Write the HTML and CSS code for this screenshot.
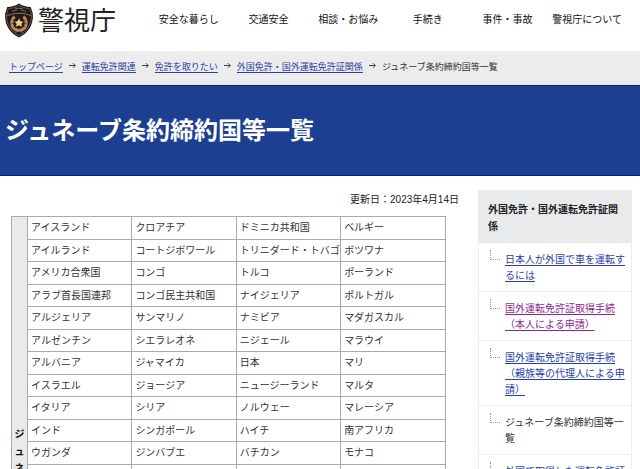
FILE: index.html
```html
<!DOCTYPE html>
<html lang="ja">
<head>
<meta charset="utf-8">
<meta name="viewport" content="width=device-width, initial-scale=1">
<title>ジュネーブ条約締約国等一覧 警視庁</title>
<link rel="stylesheet" href="styles.css">
</head>
<body>
<header class="site-header">
  <a class="logo" href="#">
    <svg class="emblem" viewBox="0 0 30 36" aria-hidden="true">
      <path d="M15 0.5 C18 3 23 4 27 4 C28 7 29 9 29.3 12 C29.8 23 24 31 15 35.6 C6 31 0.2 23 0.7 12 C1 9 2 7 3 4 C7 4 12 3 15 0.5Z" fill="#201a1b"/>
      <path d="M15 2.5 C18 4.600 22 5.600 25.800 5.700 C27 8 27.600 10 27.800 13 C28 22 23 29.500 15 33.800 C7 29.500 2 22 2.200 13 C2.400 10 3 8 4.200 5.700 C8 5.600 12 4.600 15 2.500Z" fill="none" stroke="#806052" stroke-width="0.800"/>
      <path d="M2.500 13 Q15 8 27.500 13" fill="none" stroke="#8b7165" stroke-width="1"/>
      <path d="M8 8.500 L13 7 M17 7 L22 8.500 M11 5.500 H19" stroke="#8b7165" stroke-width="1"/>
      <path d="M10.500 14 C6 18 7 25 11 27 C13 28.500 17 28.500 19 27 C23 25 24 18 19.500 14" fill="none" stroke="#b98a55" stroke-width="3"/>
      <path d="M8 17 L11 19 M7.500 21 L11 21.500 M9 25 L12 23 M22 17 L19 19 M22.500 21 L19 21.500 M21 25 L18 23" stroke="#3b2821" stroke-width="0.700"/>
      <path d="M15 16 L16.500 18.800 L19.500 19.200 L17.400 21.300 L18 24.400 L15 23 L12 24.400 L12.600 21.300 L10.500 19.200 L13.500 18.800Z" fill="#f3cf83"/>
      <path d="M11 30 Q15 28 19 30" fill="none" stroke="#8b6b54" stroke-width="1"/>
    </svg>
    <span>警視庁</span>
  </a>
  <nav class="main-nav" aria-label="メインメニュー">
    <a href="#">安全な暮らし</a>
    <a href="#">交通安全</a>
    <a href="#">相談・お悩み</a>
    <a href="#">手続き</a>
    <a href="#">事件・事故</a>
    <a href="#">警視庁について</a>
  </nav>
</header>

<nav class="breadcrumb" aria-label="現在位置">
  <a href="#">トップページ</a>
  <svg class="arrow" viewBox="0 0 7 7" aria-hidden="true"><path d="M0 3.500H6.300M4 1.200L6.300 3.500L4 5.800"/></svg>
  <a href="#">運転免許関連</a>
  <svg class="arrow" viewBox="0 0 7 7" aria-hidden="true"><path d="M0 3.500H6.300M4 1.200L6.300 3.500L4 5.800"/></svg>
  <a href="#">免許を取りたい</a>
  <svg class="arrow" viewBox="0 0 7 7" aria-hidden="true"><path d="M0 3.500H6.300M4 1.200L6.300 3.500L4 5.800"/></svg>
  <a href="#">外国免許・国外運転免許証関係</a>
  <svg class="arrow" viewBox="0 0 7 7" aria-hidden="true"><path d="M0 3.500H6.300M4 1.200L6.300 3.500L4 5.800"/></svg>
  <span>ジュネーブ条約締約国等一覧</span>
</nav>

<h1 class="page-title">ジュネーブ条約締約国等一覧</h1>

<div class="layout">
  <main class="content">
    <p class="updated">更新日：2023年4月14日</p>
    <table class="countries">
      <colgroup><col class="col-head"><col><col><col><col></colgroup>
      <tbody>
        <tr><th rowspan="12" scope="rowgroup">ジ<br>ュ<br>ネ</th><td>アイスランド</td><td>クロアチア</td><td>ドミニカ共和国</td><td>ベルギー</td></tr>
        <tr><td>アイルランド</td><td>コートジボワール</td><td>トリニダード・トバゴ</td><td>ボツワナ</td></tr>
        <tr><td>アメリカ合衆国</td><td>コンゴ</td><td>トルコ</td><td>ポーランド</td></tr>
        <tr><td>アラブ首長国連邦</td><td>コンゴ民主共和国</td><td>ナイジェリア</td><td>ポルトガル</td></tr>
        <tr><td>アルジェリア</td><td>サンマリノ</td><td>ナミビア</td><td>マダガスカル</td></tr>
        <tr><td>アルゼンチン</td><td>シエラレオネ</td><td>ニジェール</td><td>マラウイ</td></tr>
        <tr><td>アルバニア</td><td>ジャマイカ</td><td>日本</td><td>マリ</td></tr>
        <tr><td>イスラエル</td><td>ジョージア</td><td>ニュージーランド</td><td>マルタ</td></tr>
        <tr><td>イタリア</td><td>シリア</td><td>ノルウェー</td><td>マレーシア</td></tr>
        <tr><td>インド</td><td>シンガポール</td><td>ハイチ</td><td>南アフリカ</td></tr>
        <tr><td>ウガンダ</td><td>ジンバブエ</td><td>バチカン</td><td>モナコ</td></tr>
        <tr><td></td><td></td><td></td><td></td></tr>
      </tbody>
    </table>
  </main>
  <aside class="sidebar">
    <h2>外国免許・国外運転免許証関係</h2>
    <ul>
      <li><a href="#">日本人が外国で車を運転するには</a></li>
      <li><a class="visited" href="#">国外運転免許証取得手続（本人による申請）</a></li>
      <li><a href="#">国外運転免許証取得手続（親族等の代理人による申請）</a></li>
      <li>ジュネーブ条約締約国等一覧</li>
      <li><a href="#">外国で取得した運転免許証</a></li>
    </ul>
  </aside>
</div>
</body>
</html>
```
FILE: styles.css
```css
* {
  box-sizing: border-box;
}

body {
  height: 100vh;
  margin: 0;
  overflow: hidden;
  background: #fff;
  color: #333;
  font-family: "Noto Sans CJK JP", sans-serif;
  font-size: 10px;
  line-height: 16px;
}

a {
  color: #2a41a4;
}

.site-header {
  display: flex;
  align-items: flex-start;
  padding-right: 13px;
  height: 51px;
}

.logo {
  display: flex;
  align-items: flex-start;
  flex: none;
  gap: 4px;
  width: 149px;
  padding: 3px 0 0 4px;
  color: #222;
  font-size: 26px;
  line-height: 32px;
  text-decoration: none;
}

.emblem {
  width: 30px;
  height: 35px;
}

.main-nav {
  display: grid;
  flex: 1;
  grid-template-columns: repeat(6, 1fr);
  padding-top: 11px;
  text-align: center;
  white-space: nowrap;
}

.main-nav a {
  color: #111;
  text-decoration: none;
}

.breadcrumb {
  display: flex;
  align-items: center;
  gap: 6px;
  height: 34px;
  padding: 0 9px 2px;
  background: #ececec;
  font-size: 9px;
  white-space: nowrap;
}

.breadcrumb a,
.sidebar a {
  text-underline-offset: 2px;
}

.arrow {
  flex: none;
  width: 7px;
  height: 7px;
  margin-bottom: 4px;
  fill: none;
  stroke: #444;
  stroke-width: 1;
}

.page-title {
  margin: 0;
  padding: 26px 5px 30px;
  border: solid #0b1c72;
  border-width: 1px 0;
  background: #1d3f92;
  color: #fff;
  font-size: 24px;
  font-weight: 700;
  line-height: 33px;
}

.layout {
  display: grid;
  grid-template-columns: minmax(0, 1fr) 154px;
  gap: 19px;
  align-items: start;
  padding: 14px 8px 0 11px;
}

.updated {
  margin: 2px 0 8px;
  color: #222;
  font-family: "Liberation Sans", "Noto Sans CJK JP", sans-serif;
  text-align: right;
}

.countries {
  width: 97%;
  border-collapse: collapse;
  table-layout: fixed;
}

.col-head {
  width: 16px;
}

.countries th,
.countries td {
  border: 1px solid #aaa;
}

.countries th {
  padding: 208px 0 0;
  background: #e9eaec;
  color: #111;
  line-height: 17px;
  vertical-align: top;
}

.countries td {
  height: 23px;
  padding: 0 0 2px 3px;
  white-space: nowrap;
}

.countries tr:nth-child(even) td {
  height: 22px;
}

.sidebar h2 {
  margin: 0;
  padding: 10px 8px 9px 10px;
  background: #e9eaec;
  color: #222;
  font-size: 10px;
  line-height: 17px;
}

.sidebar ul {
  margin: 0;
  padding: 0;
  border: solid #eee;
  border-width: 0 1px;
  list-style: none;
}

.sidebar li {
  position: relative;
  padding: 8px 5px 8px 26px;
  border-bottom: 1px solid #eee;
}

.sidebar li::before {
  content: "";
  position: absolute;
  top: 7px;
  left: 11px;
  width: 9px;
  height: 9px;
  border: dotted #999;
  border-width: 0 0 1px 1px;
}

.sidebar .visited {
  color: #8b2890;
}
```
